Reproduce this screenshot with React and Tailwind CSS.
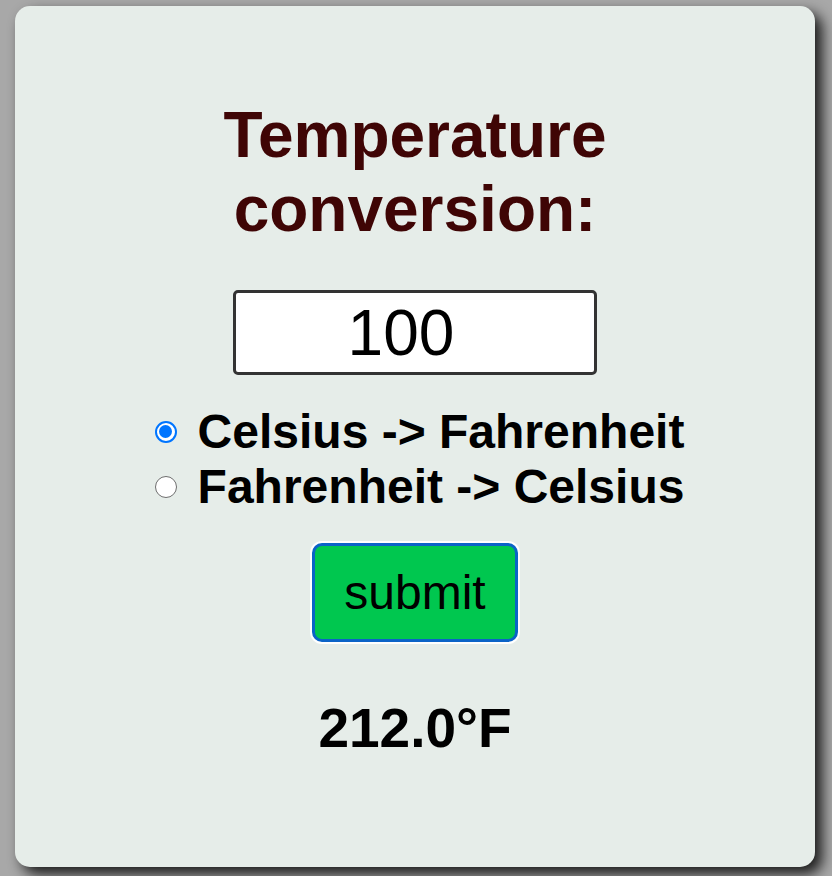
import { useState } from "react";

export default function App() {
  const [value, setValue] = useState("100");
  const [mode, setMode] = useState("c2f");
  const [result, setResult] = useState("212.0°F");

  const convert = () => {
    const n = parseFloat(value);
    if (isNaN(n)) return setResult("");
    if (mode === "c2f") setResult(((n * 9) / 5 + 32).toFixed(1) + "°F");
    else setResult((((n - 32) * 5) / 9).toFixed(1) + "°C");
  };

  const Radio = ({ checked, onClick }) => (
    <span
      onClick={onClick}
      className={
        "inline-flex items-center justify-center w-[22px] h-[22px] rounded-full bg-white shrink-0 " +
        (checked ? "border-2 border-[#0075ff]" : "border-[1.5px] border-[#6e6e6e]")
      }
    >
      {checked && <span className="w-[13px] h-[13px] rounded-full bg-[#0075ff]"></span>}
    </span>
  );

  return (
    <div
      className="h-screen bg-[#a8a8a8] pt-[6px] pl-[15px] overflow-hidden"
      style={{ fontFamily: '"Liberation Sans", Arial, sans-serif' }}
    >
      <div className="w-[800px] h-[861px] bg-[#e6ede9] rounded-[15px] shadow-[7px_7px_14px_rgba(0,0,0,0.85)] flex flex-col items-center pt-[93px]">
        <h1 className="text-[64px] font-bold text-[#3f0505] text-center leading-[73.5px]">
          Temperature
          <br />
          conversion:
        </h1>

        <input
          value={value}
          onChange={(e) => setValue(e.target.value)}
          className="mt-[44px] w-[364px] h-[85px] bg-white border-[3px] border-[#333] rounded-[5px] pr-[28px] text-center text-[64px] text-black outline-none"
        />

        <div className="mt-[29px] flex flex-col items-start text-[48px] font-bold text-black leading-[55px] ml-[9px]">
          <label className="flex items-center gap-[21px] cursor-pointer" onClick={() => setMode("c2f")}>
            <Radio checked={mode === "c2f"} />
            Celsius -&gt; Fahrenheit
          </label>
          <label className="flex items-center gap-[21px] cursor-pointer" onClick={() => setMode("f2c")}>
            <Radio checked={mode === "f2c"} />
            Fahrenheit -&gt; Celsius
          </label>
        </div>

        <button
          onClick={convert}
          className="mt-[29px] w-[206px] h-[99px] bg-[#00c74f] border-[3px] border-[#0b63c7] rounded-[10px] shadow-[0_0_0_2px_#ffffff] text-[48px] text-black"
        >
          submit
        </button>

        <div className="mt-[55px] text-[55px] font-bold text-black leading-[63px]">{result}</div>
      </div>
    </div>
  );
}
